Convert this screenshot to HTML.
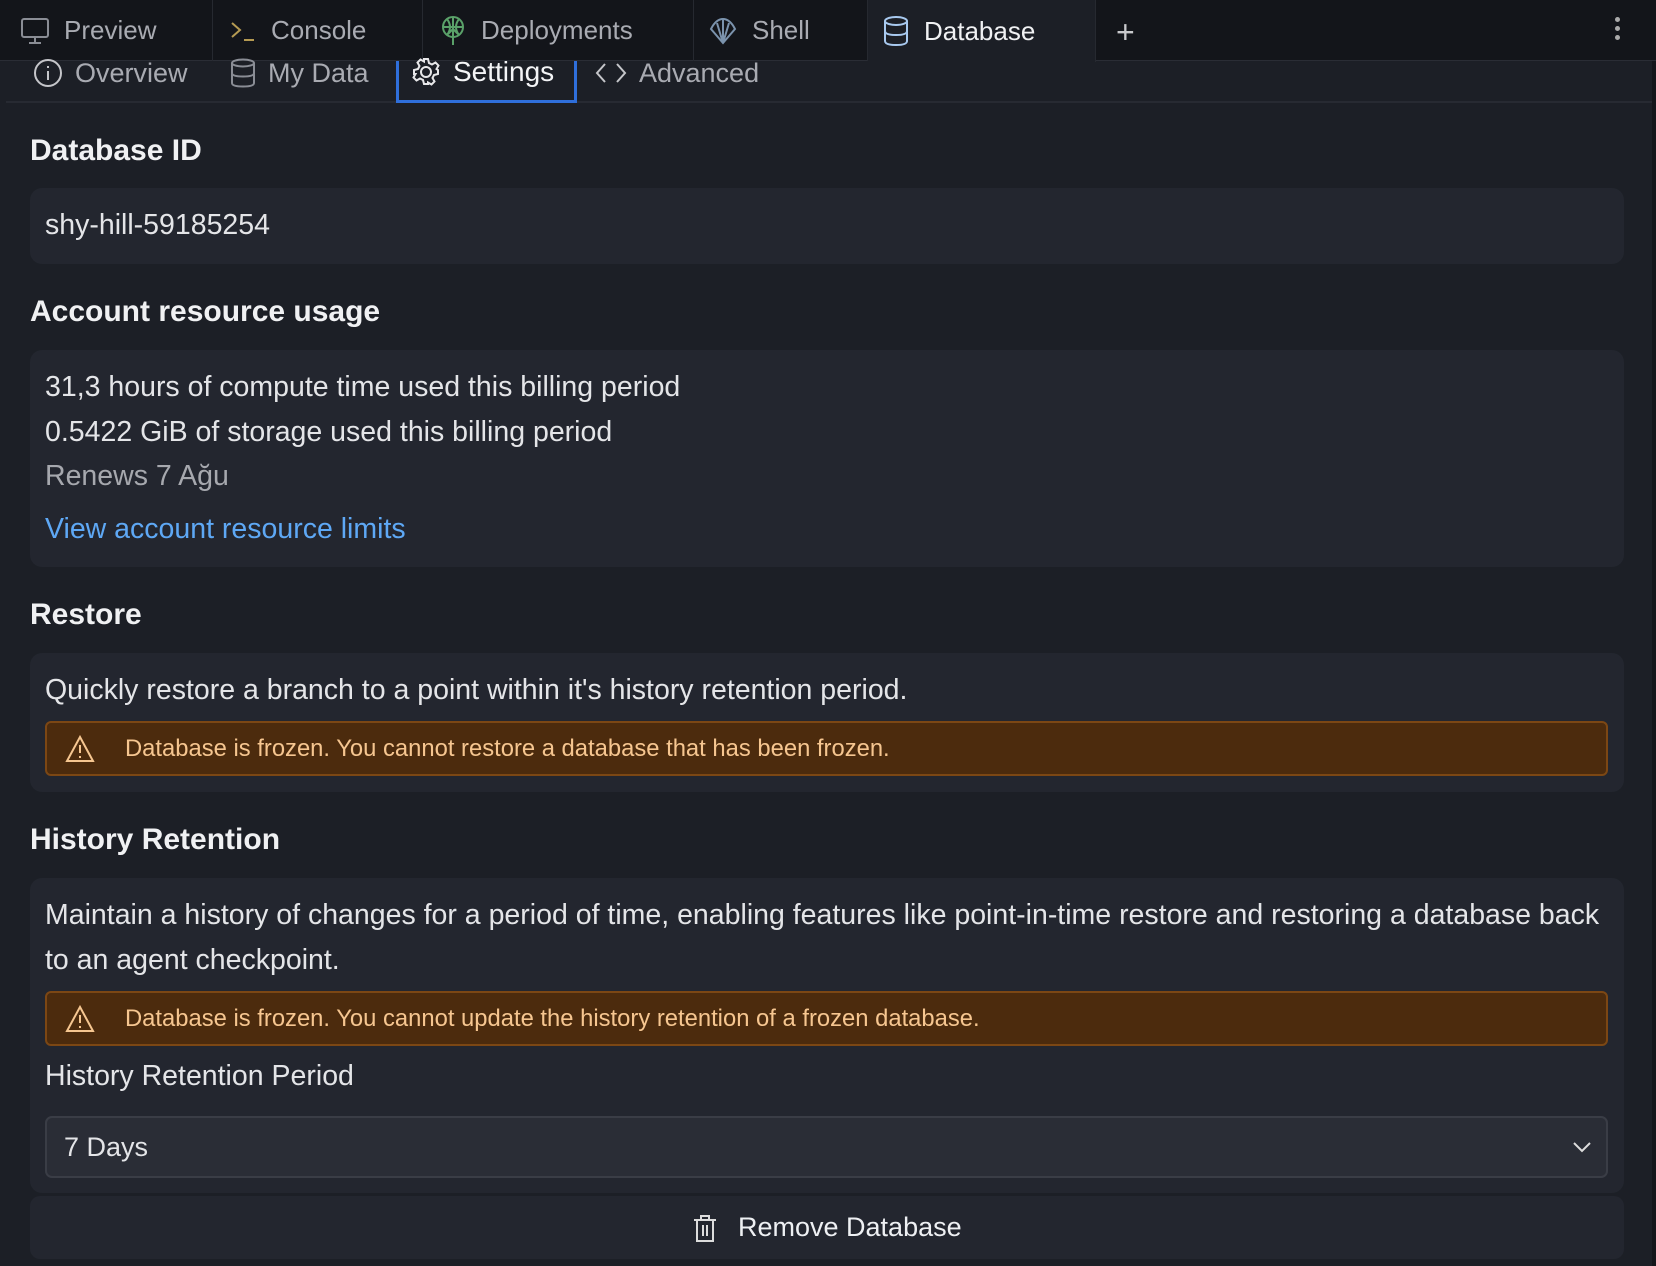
<!DOCTYPE html>
<html><head><meta charset="utf-8"><style>
*{box-sizing:border-box;margin:0;padding:0}
body{width:1656px;height:1266px;overflow:hidden;background:#1c1f26;font-family:"Liberation Sans",sans-serif;color:#e4e5e8;position:relative}
.top{position:absolute;left:0;top:0;width:1656px;height:61px;background:#13151a;border-bottom:1px solid #2a2d35}
.tab{position:absolute;top:0;height:61px;display:flex;align-items:center;font-size:26px;color:#a9abb2;border-right:1px solid #262930}
.tab svg{margin-right:14px}
.sub{position:absolute;top:61px;left:6px;width:1646px;height:42px;border-bottom:2px solid #272a32}
.st{position:absolute;top:0;height:42px;display:flex;align-items:center;font-size:27px;color:#a9abb2;padding-bottom:18px}
.st svg{margin-right:12px}
h2{position:absolute;left:30px;font-size:30px;font-weight:bold;color:#f0f1f3}
.card{position:absolute;left:30px;width:1594px;background:#23262f;border-radius:12px}
.t{position:absolute;left:15px;font-size:28.5px;white-space:nowrap}
.warn{position:absolute;left:15px;width:1563px;height:55px;background:#4c2b0d;border:2px solid #7c4714;border-radius:6px;color:#f6c690;font-size:23.8px;display:flex;align-items:center}
.warn svg{margin:0 30px 0 18px}
.right{position:absolute;right:0;top:61px;width:4px;height:1205px;background:#14161b}
</style></head><body>
<div class="top">
 <div class="tab" style="left:0;width:213px;padding-left:20px"><svg width="30" height="28" viewBox="0 0 30 28" fill="none" stroke="#8a8d95" stroke-width="2"><rect x="2" y="2" width="26" height="18" rx="2"/><path d="M15 20v6M9 26h12"/></svg>Preview</div>
 <div class="tab" style="left:213px;width:210px;padding-left:16px"><svg width="28" height="24" viewBox="0 0 28 24" fill="none" stroke="#b59a52" stroke-width="2"><path d="M3 4l8 7-8 7M15 21h10"/></svg>Console</div>
 <div class="tab" style="left:423px;width:271px;padding-left:16px"><svg width="28" height="32" viewBox="0 0 28 32" fill="none" stroke="#5aa169" stroke-width="2"><circle cx="14" cy="12" r="10"/><path d="M4 12h20M14 2v28M9 19l5-5 5 5M8 4q6 8 0 16M20 4q-6 8 0 16"/></svg>Deployments</div>
 <div class="tab" style="left:694px;width:174px;padding-left:14px"><svg width="30" height="28" viewBox="0 0 30 28" fill="none" stroke="#7b93ad" stroke-width="2"><path d="M15 26L3 12Q8 2 15 2Q22 2 27 12Z"/><path d="M15 26L9 6M15 26L21 6M15 26V2"/></svg>Shell</div>
 <div class="tab" style="left:868px;width:228px;padding-left:14px;background:#1c1f26;color:#f0f1f3;height:62px"><svg width="28" height="32" viewBox="0 0 28 32" fill="none" stroke="#a8c9ef" stroke-width="2"><ellipse cx="14" cy="6" rx="11" ry="4"/><path d="M3 6v20q0 4 11 4t11-4V6M3 16q0 4 11 4t11-4"/></svg>Database</div>
 <div style="position:absolute;left:1116px;top:14px;font-size:32px;color:#c8c9cc;font-weight:300">+</div>
 <div style="position:absolute;left:1615px;top:17px;width:6px">
  <div style="width:5px;height:5px;border-radius:50%;background:#aaa;margin-bottom:4px"></div><div style="width:5px;height:5px;border-radius:50%;background:#aaa;margin-bottom:4px"></div><div style="width:5px;height:5px;border-radius:50%;background:#aaa"></div></div>
</div>
<div class="sub">
 <div class="st" style="left:27px"><svg width="30" height="30" viewBox="0 0 30 30" fill="none" stroke="#c5c6ca" stroke-width="2"><circle cx="15" cy="15" r="13"/><path d="M15 13v9M15 8v2"/></svg>Overview</div>
 <div class="st" style="left:224px"><svg width="26" height="30" viewBox="0 0 26 30" fill="none" stroke="#8a8d95" stroke-width="2"><ellipse cx="13" cy="5" rx="11" ry="3.5"/><path d="M2 5v20q0 3.5 11 3.5t11-3.5V5M2 15q0 3.5 11 3.5t11-3.5"/></svg>My Data</div>
 <div class="st" style="left:390px;width:181px;height:42px;border:3px solid #2f6fdb;border-top:none;padding-left:12px;color:#f3f4f6;font-size:28px"><svg width="30" height="30" viewBox="0 0 30 30" fill="none" stroke="#e8e8ea" stroke-width="2"><circle cx="15" cy="15" r="5"/><path d="M13 2h4l1 4 3 1.5 3.5-2 3 3-2 3.5L27 13l-0 4-4 1-1.5 3 2 3.5-3 3-3.5-2L17 27h-4l-1-4-3-1.5-3.5 2-3-3 2-3.5L3 17v-4l4-1 1.5-3-2-3.5 3-3 3.5 2z"/></svg>Settings</div>
 <div class="st" style="left:589px"><svg width="32" height="24" viewBox="0 0 32 24" fill="none" stroke="#c5c6ca" stroke-width="2"><path d="M10 3l-8 9 8 9M22 3l8 9-8 9"/></svg>Advanced</div>
</div>
<div class="right"></div>

<h2 style="top:134px">Database ID</h2>
<div class="card" style="top:188px;height:76px"><div class="t" style="top:21px">shy-hill-59185254</div></div>

<h2 style="top:295px">Account resource usage</h2>
<div class="card" style="top:350px;height:217px">
 <div class="t" style="top:21px">31,3 hours of compute time used this billing period</div>
 <div class="t" style="top:66px">0.5422 GiB of storage used this billing period</div>
 <div class="t" style="top:110px;color:#a6a8ae">Renews 7 Ağu</div>
 <div class="t" style="top:163px;color:#5ea8f5">View account resource limits</div>
</div>

<h2 style="top:598px">Restore</h2>
<div class="card" style="top:653px;height:139px">
 <div class="t" style="top:21px">Quickly restore a branch to a point within it's history retention period.</div>
 <div class="warn" style="top:68px"><svg width="30" height="28" viewBox="0 0 30 28" fill="none" stroke="#f6c690" stroke-width="2"><path d="M15 2L28 26H2Z"/><path d="M15 10v8M15 21v2"/></svg>Database is frozen. You cannot restore a database that has been frozen.</div>
</div>

<h2 style="top:823px">History Retention</h2>
<div class="card" style="top:878px;height:315px">
 <div class="t" style="top:21px">Maintain a history of changes for a period of time, enabling features like point-in-time restore and restoring a database back</div>
 <div class="t" style="top:66px">to an agent checkpoint.</div>
 <div class="warn" style="top:113px"><svg width="30" height="28" viewBox="0 0 30 28" fill="none" stroke="#f6c690" stroke-width="2"><path d="M15 2L28 26H2Z"/><path d="M15 10v8M15 21v2"/></svg>Database is frozen. You cannot update the history retention of a frozen database.</div>
 <div class="t" style="top:182px">History Retention Period</div>
 <div style="position:absolute;left:15px;top:238px;width:1563px;height:62px;background:#2a2d36;border:2px solid #3a3d46;border-radius:7px">
  <div style="position:absolute;left:17px;top:14px;font-size:27px">7 Days</div>
  <svg style="position:absolute;right:14px;top:22px" width="20" height="14" viewBox="0 0 20 14" fill="none" stroke="#ddd" stroke-width="2"><path d="M2 3l8 8 8-8"/></svg>
 </div>
</div>
<div class="card" style="top:1196px;height:63px;border-radius:10px">
 <div style="position:absolute;left:662px;top:16px;display:flex;align-items:center;font-size:27px;color:#eef0f3"><svg width="26" height="30" viewBox="0 0 26 30" fill="none" stroke="#ddd" stroke-width="2" style="margin-right:20px"><path d="M2 7h22M9 7V3h8v4M5 7v21h16V7M11 12v11M15 12v11"/></svg>Remove Database</div>
</div>
</body></html>
